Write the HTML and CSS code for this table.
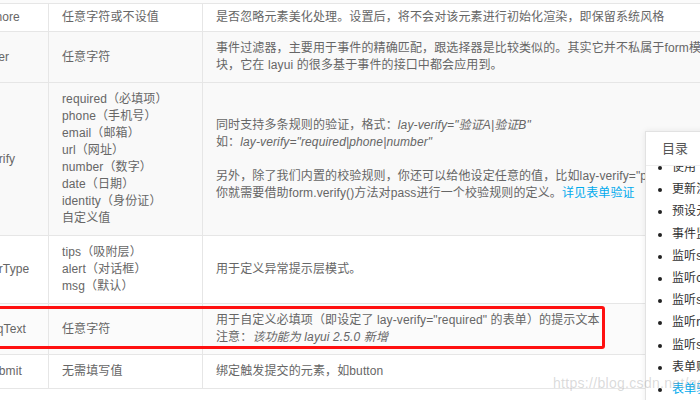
FILE: index.html
```html
<!DOCTYPE html>
<html lang="zh">
<head>
<meta charset="utf-8">
<title>form 属性</title>
<link rel="stylesheet" href="styles.css">
</head>
<body>
<div class="page">
  <div class="above"></div>
  <table class="attr-table">
    <colgroup>
      <col class="c1"><col class="c2"><col class="c3">
    </colgroup>
    <tbody>
      <tr class="r1">
        <td>lay-ignore</td>
        <td>任意字符或不设值</td>
        <td>是否忽略元素美化处理。设置后，将不会对该元素进行初始化渲染，即保留系统风格</td>
      </tr>
      <tr class="grey">
        <td>lay-filter</td>
        <td>任意字符</td>
        <td>事件过滤器，主要用于事件的精确匹配，跟选择器是比较类似的。其实它并不私属于form模<br>块，它在 layui 的很多基于事件的接口中都会应用到。</td>
      </tr>
      <tr class="grey">
        <td>lay-verify</td>
        <td>required（必填项）<br>phone（手机号）<br>email（邮箱）<br>url（网址）<br>number（数字）<br>date（日期）<br>identity（身份证）<br>自定义值</td>
        <td>同时支持多条规则的验证，格式：<i>lay-verify="验证A|验证B"</i><br>如：<i>lay-verify="required|phone|number"</i><br><br>另外，除了我们内置的校验规则，你还可以给他设定任意的值，比如lay-verify="pass"，那么<br>你就需要借助form.verify()方法对pass进行一个校验规则的定义。<a class="link">详见表单验证</a></td>
      </tr>
      <tr>
        <td>lay-verType</td>
        <td>tips（吸附层）<br>alert（对话框）<br>msg（默认）</td>
        <td>用于定义异常提示层模式。</td>
      </tr>
      <tr class="grey2">
        <td>lay-reqText</td>
        <td>任意字符</td>
        <td>用于自定义必填项（即设定了 lay-verify="required" 的表单）的提示文本<br>注意：<i>该功能为 layui 2.5.0 新增</i></td>
      </tr>
      <tr>
        <td>lay-submit</td>
        <td>无需填写值</td>
        <td>绑定触发提交的元素，如button</td>
      </tr>
    </tbody>
  </table>

  <div class="highlight"></div>

  <div class="toc">
    <div class="toc-head">目录</div>
    <ul class="toc-list">
      <li>使用</li>
      <li>更新渲染</li>
      <li>预设元素属性</li>
      <li>事件监听</li>
      <li>监听select</li>
      <li>监听checkbox</li>
      <li>监听switch</li>
      <li>监听radio</li>
      <li>监听submit</li>
      <li>表单赋值/取值</li>
      <li class="active">表单验证</li>
    </ul>
  </div>

  <div class="watermark">https://blog.csdn.net/qq</div>
</div>
</body>
</html>
```

FILE: styles.css
```css
html, body {
  margin: 0;
  padding: 0;
  background: #fff;
}
body {
  width: 700px;
  height: 400px;
  overflow: hidden;
  font-family: "Liberation Sans", "Noto Sans CJK TC", "Noto Sans CJK SC", sans-serif;
  font-size: 12px;
  letter-spacing: 0.12px;
  color: #666;
}
.page {
  position: relative;
  width: 700px;
  height: 400px;
  overflow: hidden;
}
.above {
  height: 3px;
  background: #fbfbfb;
}
.attr-table {
  border-collapse: collapse;
  margin-left: -44px;
  table-layout: fixed;
  width: 764px;
}
.attr-table col.c1 { width: 92px; }
.attr-table col.c2 { width: 154px; }
.attr-table col.c3 { width: 518px; }
.attr-table td {
  border: 1px solid #e6e6e6;
  padding: 8px 14px 8px 13px;
  line-height: 17px;
  vertical-align: middle;
  white-space: nowrap;
  overflow: hidden;
}
.attr-table td:first-child { padding-left: 9px; }
.attr-table tr.r1 td {
  padding-top: 5px;
  padding-bottom: 5px;
}
.attr-table tr.grey td { background: #f9f9f9; }
.attr-table tr.grey2 td { background: #fbfbfb; }
.attr-table i {
  font-style: italic;
}
.link {
  color: #01aaed;
  text-decoration: none;
}
.highlight {
  position: absolute;
  left: -10px;
  top: 306px;
  width: 609px;
  height: 37px;
  border: 3px solid #ff1010;
  border-radius: 3px;
}
.toc {
  position: absolute;
  left: 645px;
  top: 131px;
  width: 150px;
  height: 300px;
  background: #fff;
  border: 1px solid #e2e2e2;
  box-shadow: 0 0 6px rgba(0, 0, 0, 0.08);
  overflow: hidden;
}
.toc-head {
  position: relative;
  z-index: 1;
  height: 33px;
  line-height: 33px;
  padding-left: 16px;
  font-size: 13px;
  color: #555;
  background: #fff;
  border-bottom: 1px solid #eee;
}
.toc-list {
  list-style: none;
  margin: -10px 0 0 0;
  padding: 0;
}
.toc-list li {
  position: relative;
  height: 22.2px;
  line-height: 22.2px;
  padding-left: 26px;
  font-size: 12px;
  color: #333;
  white-space: nowrap;
}
.toc-list li::before {
  content: "";
  position: absolute;
  left: 12px;
  top: 10px;
  width: 4px;
  height: 4px;
  border-radius: 50%;
  background: #222;
}
.toc-list li.active { color: #01aaed; }
.watermark {
  position: absolute;
  left: 553px;
  top: 375px;
  font-size: 14px;
  color: rgba(150, 150, 150, 0.35);
  white-space: nowrap;
  letter-spacing: 0.3px;
}
```
